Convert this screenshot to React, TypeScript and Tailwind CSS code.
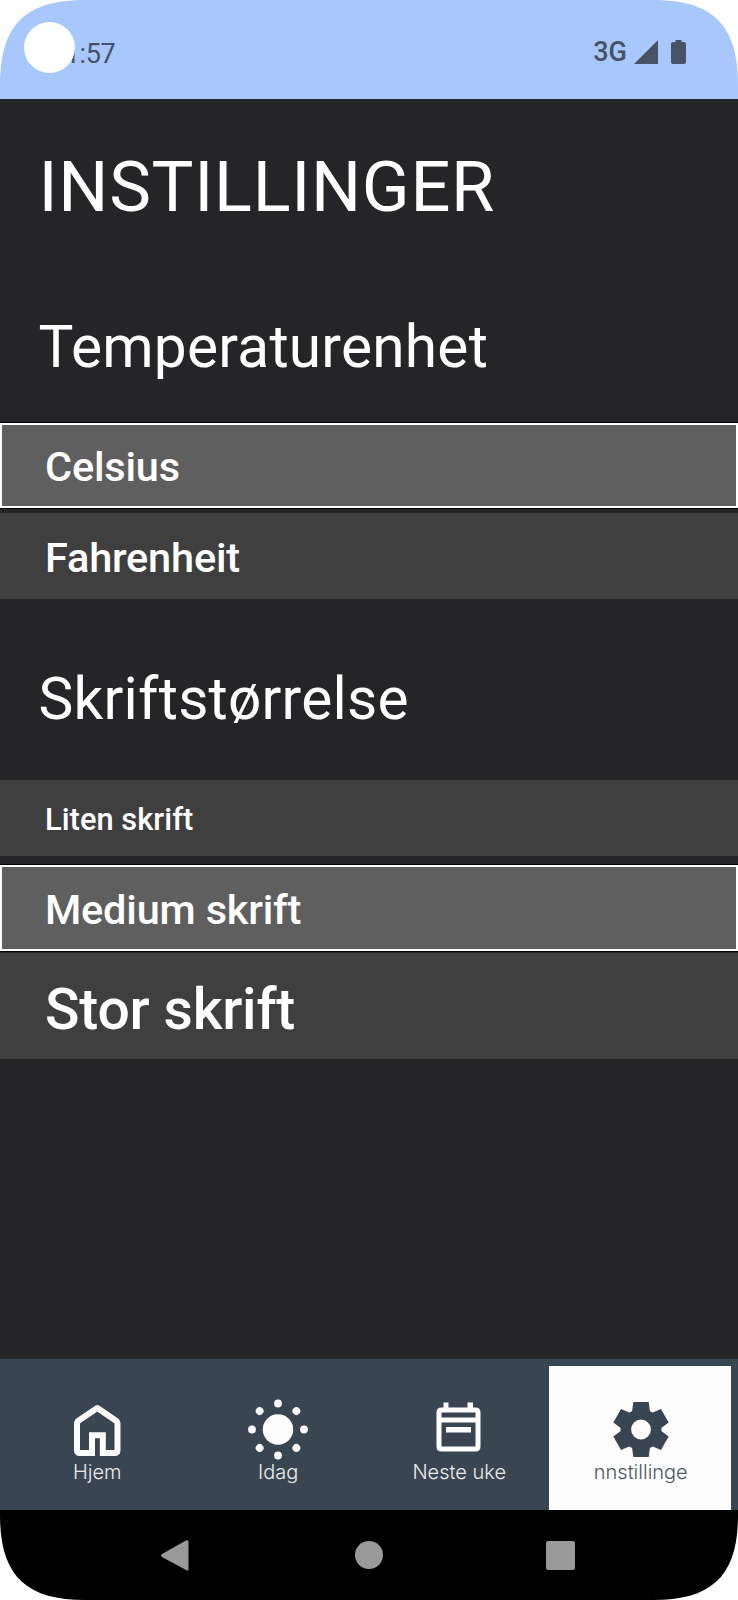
import type { ReactNode } from "react";

type OptionProps = { label: string; box: string; text: string; selected?: boolean };

function Option({ label, box, text, selected = false }: OptionProps) {
  const state = selected
    ? "border-[2px] border-white bg-[#5f5f5f] pl-[43px] outline outline-1 outline-black"
    : "bg-[#3f3f3f] pl-[45px]";
  return (
    <button className={`flex w-full shrink-0 items-center text-left font-medium text-white ${state} ${box}`}>
      <span className={`whitespace-nowrap ${text}`}>{label}</span>
    </button>
  );
}

type TabProps = { label: string; width?: string; active?: boolean; children: ReactNode };

function Tab({ label, width = "w-[181px]", active = false, children }: TabProps) {
  return (
    <button
      className={`flex h-[144px] flex-col items-center pt-[31px] pl-[1.5px] ${width} ${
        active ? "bg-[#fdfdfd] text-[#394551]" : "text-[#fdfdfd]"
      }`}
    >
      <svg width="64" height="64" viewBox="0 0 64 64" fill="currentColor">
        {children}
      </svg>
      <span className="font-[Inter,sans-serif] text-[20px] leading-[23px] font-light whitespace-nowrap opacity-90">
        {label}
      </span>
    </button>
  );
}

const rayAngles = [0, 45, 90, 135, 180, 225, 270, 315];
const toothAngles = [0, 60, 120, 180, 240, 300];

export default function App() {
  return (
    <div className="h-[1600px] w-[738px] bg-white">
      <div className="flex h-full w-full flex-col overflow-hidden font-[Roboto,sans-serif] text-white [clip-path:path('M0_85C0_25_25_0_85_0H653C713_0_738_25_738_85V1515C738_1575_713_1600_653_1600H85C25_1600_0_1575_0_1515Z')]">
        <header className="relative flex h-[99px] shrink-0 items-center justify-between bg-[#a8c7fc] pr-[52px] pl-[50px] text-[#465265]">
          <span className="pt-[8px] text-[27px] leading-[32px] tracking-[-0.4px]">11:57</span>
          <div className="absolute top-[22px] left-[24px] size-[51px] rounded-full bg-white" />
          <div className="flex items-center pt-[4px]">
            <span className="mr-[7px] pt-px text-[27px] leading-[32px] font-medium">3G</span>
            <svg width="52" height="24" viewBox="0 0 52 24" fill="currentColor">
              <path d="M0 24 24 0V24Z" />
              <path d="M41.500 0H47.500V2H50Q52 2 52 4V22Q52 24 50 24H39Q37 24 37 22V4Q37 2 39 2H41.500Z" />
            </svg>
          </div>
        </header>

        <main className="flex h-[1260px] shrink-0 flex-col bg-[#252527]">
          <h1 className="mt-[47px] ml-[38.5px] h-[82px] text-[70.3px] leading-[82px] tracking-[0.7px] whitespace-nowrap">
            INSTILLINGER
          </h1>
          <h2 className="mt-[86px] ml-[38.5px] h-[67px] text-[58.6px] leading-[67px] tracking-[0.25px] whitespace-nowrap">
            Temperaturenhet
          </h2>
          <div className="mt-[42px] flex flex-col">
            <Option label="Celsius" box="h-[85px] pt-[4px]" text="text-[41.5px] tracking-[-0.2px]" selected />
            <Option label="Fahrenheit" box="mt-[5px] h-[86px] pt-[5px]" text="text-[41.5px] tracking-[-0.2px]" />
          </div>
          <h2 className="mt-[67px] ml-[38.5px] h-[68px] text-[58.6px] leading-[67px] tracking-[0.25px] whitespace-nowrap">
            Skriftstørrelse
          </h2>
          <div className="mt-[46px] flex flex-col">
            <Option label="Liten skrift" box="h-[76px] pt-[5px]" text="text-[30.8px] tracking-[0.05px]" />
            <Option label="Medium skrift" box="mt-[9px] h-[86px] pt-[4px]" text="text-[41.5px] tracking-[-0.2px]" selected />
            <Option label="Stor skrift" box="mt-[2px] h-[106px] pt-[8px]" text="text-[57px] tracking-[-0.2px]" />
          </div>
        </main>

        <nav className="flex h-[151px] shrink-0 bg-[#394551] pt-[7px] pl-[6px]">
          <Tab label="Hjem">
            <g fill="none" stroke="currentColor" strokeWidth="6">
              <path
                d="M26.500 56H15Q12 56 12 53V27Q12 24.800 13.800 23.500L32.300 11 50.700 23.500Q52.500 24.800 52.500 27V53Q52.500 56 49.500 56H38"
                strokeLinejoin="round"
              />
              <path d="M27 59V38.300H37.800V59" />
            </g>
          </Tab>
          <Tab label="Idag">
            <circle cx="32" cy="32.500" r="15.2" />
            {rayAngles.map((angle) => (
              <circle key={angle} cx="32" cy="6.500" r="3.9" transform={`rotate(${angle} 32 32.500)`} />
            ))}
          </Tab>
          <Tab label="Neste uke">
            <path
              fillRule="evenodd"
              transform="translate(-0.5 0.4)"
              d="M17 5H22V10H41V5H46.500V10H49Q54 10 54 15V49Q54 54 49 54H15Q10 54 10 49V15Q10 10 15 10H17ZM15 15V20H49V15ZM15 25V49H49V25ZM19.500 29.500H44.500V35H19.500Z"
            />
          </Tab>
          <Tab label="nnstillinge" width="w-[182px]" active>
            <circle cx="32" cy="32.500" r="15.2" fill="none" stroke="currentColor" strokeWidth="10.600" />
            {toothAngles.map((angle) => (
              <path key={angle} d="M24.300 5H39.700L41 15 38 20H26L23 15Z" transform={`rotate(${angle} 32 32.500)`} />
            ))}
          </Tab>
        </nav>

        <footer className="flex h-[90px] shrink-0 items-center justify-between bg-black pr-[163px] pl-[161px] text-[#999]">
          <svg width="28" height="31" viewBox="0 0 28 31" fill="currentColor">
            <path d="M1 14 25 .5Q27.500-.5 27.500 2V29Q27.500 31.500 25 30L1 17Q-1 15.500 1 14Z" />
          </svg>
          <div className="ml-[2px] size-[28px] rounded-full bg-[#999]" />
          <div className="size-[29px] rounded-[2px] bg-[#999]" />
        </footer>
      </div>
    </div>
  );
}
